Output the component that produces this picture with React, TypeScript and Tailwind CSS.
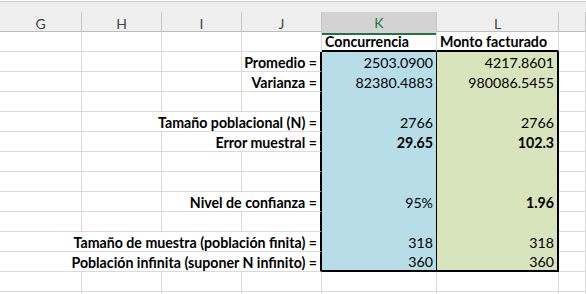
import React from 'react';

type Row = {
  label?: string;
  span?: number;
  k?: string;
  l?: string;
  kBold?: boolean;
  lBold?: boolean;
};

const cols = ['G', 'H', 'I', 'J', 'K', 'L', ''];

// filas de la hoja, de la fila de títulos hasta la fila vacía bajo el cuadro
const rows: Row[] = [
  {},
  { label: 'Promedio =', span: 1, k: '2503.0900', l: '4217.8601' },
  { label: 'Varianza =', span: 1, k: '82380.4883', l: '980086.5455' },
  {},
  { label: 'Tamaño poblacional (N) =', span: 3, k: '2766', l: '2766' },
  { label: 'Error muestral =', span: 2, k: '29.65', l: '102.3', kBold: true, lBold: true },
  {},
  {},
  { label: 'Nivel de confianza =', span: 2, k: '95%', l: '1.96', lBold: true },
  {},
  { label: 'Tamaño de muestra (población finita) =', span: 4, k: '318', l: '318' },
  { label: 'Población infinita (suponer N infinito) =', span: 4, k: '360', l: '360' },
  {},
  {},
];

const spanClass: Record<number, string> = {
  1: 'col-span-1',
  2: 'col-span-2',
  3: 'col-span-3',
  4: 'col-span-4',
};

const grid = 'grid grid-cols-[82px_80px_80px_80px_115px_122px_27px]';
const cell = 'h-[20px] border-r border-b border-[#dadada] flex items-center px-[3px] pt-[2px] whitespace-nowrap overflow-hidden';

const App: React.FC = () => {
  return (
    <div
      className="w-[586px] h-[294px] overflow-hidden bg-white text-black text-[14.2px]"
      style={{ fontFamily: 'Lato, "Liberation Sans", sans-serif' }}
    >
      <div className="h-[11px] mt-[1px] bg-[#efefef] border-t border-[#cfcfcf]" />

      {/* Encabezado de columnas */}
      <div className={`${grid} h-[20px] bg-[#efefef] border-b border-[#bdbdbd]`}>
        {cols.map((c, i) => (
          <div
            key={i}
            className={
              c === 'K'
                ? 'flex items-center justify-center bg-[#d3d3d3] text-[#217346] border-r border-[#c6c6c6] border-b-2 border-b-[#217346] text-[14px]'
                : 'flex items-center justify-center text-[#444] border-r border-[#c6c6c6] text-[14px]'
            }
          >
            {c}
          </div>
        ))}
      </div>

      {/* Cuerpo */}
      {rows.map((r, idx) => {
        const inBox = idx >= 1 && idx <= 11;
        const title = idx === 0;
        const last = idx === 11;
        const span = r.span ?? 0;
        const empties = 4 - span;
        return (
          <div key={idx} className={grid}>
            {Array.from({ length: empties }).map((_, i) => {
              const isJ = i === empties - 1 && span === 0;
              return (
                <div
                  key={i}
                  className={`${cell} ${isJ && inBox ? 'border-r-2 border-r-black' : ''}`}
                />
              );
            })}
            {span > 0 && (
              <div
                className={`${cell} ${spanClass[span]} justify-end font-bold ${inBox ? 'border-r-2 border-r-black' : ''}`}
              >
                {r.label}
              </div>
            )}
            <div
              className={`${cell} ${
                title
                  ? 'font-bold border-b-2 border-b-black'
                  : inBox
                  ? `bg-[#b7dee8] justify-end border-r-black ${last ? 'border-b-2 border-b-black' : 'border-b-0'}`
                  : ''
              } ${r.kBold ? 'font-bold' : ''}`}
            >
              {title ? 'Concurrencia' : r.k}
            </div>
            <div
              className={`${cell} ${
                title
                  ? 'font-bold border-b-2 border-b-black'
                  : inBox
                  ? `bg-[#d8e4bc] justify-end border-r-2 border-r-black ${last ? 'border-b-2 border-b-black' : 'border-b-0'}`
                  : ''
              } ${r.lBold ? 'font-bold' : ''}`}
            >
              {title ? 'Monto facturado' : r.l}
            </div>
            <div className={cell} />
          </div>
        );
      })}
    </div>
  );
};

export default App;
